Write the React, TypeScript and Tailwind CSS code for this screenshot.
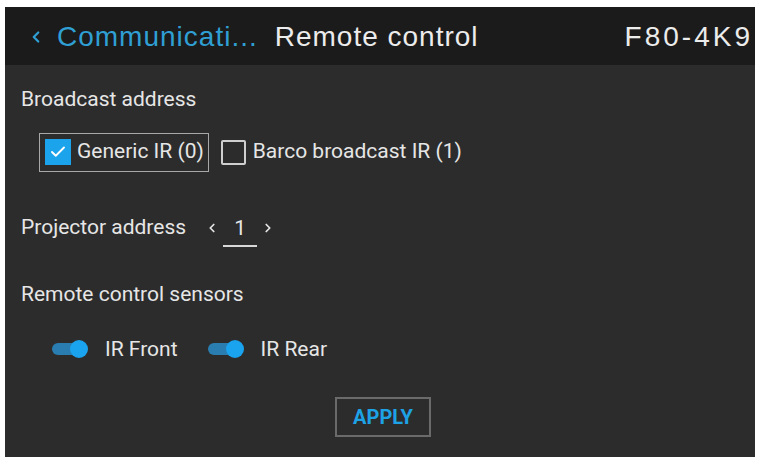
import { ChevronLeft, ChevronRight, Check } from "lucide-react";

function Toggle({ label }: { label: string }) {
  return (
    <div className="flex items-center gap-[17px]">
      <div className="relative w-[36px] h-[20px] flex items-center">
        <div className="w-[32px] h-[12px] rounded-full bg-[#2a7db0]"></div>
        <div className="absolute right-0 top-[1px] w-[18px] h-[18px] rounded-full bg-[#1aa3ee]"></div>
      </div>
      <span className="text-[21px] text-[#e6e6e6]">{label}</span>
    </div>
  );
}

export default function App() {
  return (
    <div
      className="w-[757px] h-[457px] bg-white pt-[7px] pl-[5px] pr-[2px] overflow-hidden"
      style={{ fontFamily: "Roboto, 'Liberation Sans', sans-serif" }}
    >
      <div className="flex flex-col h-full">
        {/* title bar */}
        <div
          className="h-[58px] bg-[#1b1b1b] flex items-center pl-[22px] pr-[2px] shrink-0 pt-[2px]"
          style={{ fontFamily: "'Liberation Sans', Arial, sans-serif" }}
        >
          <ChevronLeft className="w-[18px] h-[18px] text-[#2f9fd4]" strokeWidth={3} />
          <span className="ml-[12px] text-[28px] tracking-[1px] text-[#2f9fd4]">Communicati...</span>
          <span className="ml-[17px] text-[28px] tracking-[1px] text-[#ececec]">Remote control</span>
          <span className="ml-auto text-[28px] tracking-[3px] text-[#ececec]">F80-4K9</span>
        </div>

        {/* settings */}
        <div className="flex-1 bg-[#2c2c2c] pl-[16px] text-[#e6e6e6]">
          <div className="mt-[19px] text-[21px]">Broadcast address</div>

          <div className="mt-[17px] ml-[18px] flex items-center gap-[12px]">
            <div className="h-[39px] flex items-center gap-[6px] border border-[#a8a8a8] pl-[5px] pr-[4px]">
              <div className="w-[26px] h-[26px] bg-[#1ba3ec] flex items-center justify-center">
                <Check className="w-[18px] h-[18px] text-white" strokeWidth={2.5} />
              </div>
              <span className="text-[21px]">Generic IR (0)</span>
            </div>
            <div className="flex items-center gap-[7px]">
              <div className="w-[25px] h-[25px] border-2 border-[#cfcfcf] rounded-[2px]"></div>
              <span className="text-[21px]">Barco broadcast IR (1)</span>
            </div>
          </div>

          <div className="mt-[39px] flex items-center">
            <span className="text-[21px]">Projector address</span>
            <div className="ml-[19px] flex items-center">
              <ChevronLeft className="w-[14px] h-[14px]" strokeWidth={3} />
              <span className="ml-[4px] w-[34px] text-center text-[21px] border-b-2 border-[#d8d8d8] pb-[1px] translate-y-[2px]">
                1
              </span>
              <ChevronRight className="ml-[4px] w-[14px] h-[14px]" strokeWidth={3} />
            </div>
          </div>

          <div className="mt-[34px] text-[21px]">Remote control sensors</div>

          <div className="mt-[23px] ml-[31px] flex items-center gap-[30px]">
            <Toggle label="IR Front" />
            <Toggle label="IR Rear" />
          </div>

          <div className="mt-[32px] flex justify-center pr-[10px]">
            <button className="w-[96px] h-[40px] border-2 border-[#6a6a6a] text-[#1ea2e6] font-bold text-[20px]">
              APPLY
            </button>
          </div>
        </div>
      </div>
    </div>
  );
}
